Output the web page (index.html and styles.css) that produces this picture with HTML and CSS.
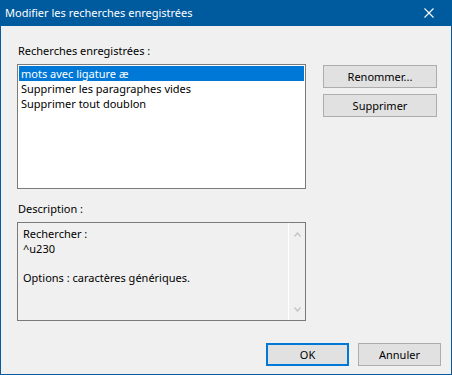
FILE: index.html
```html
<!DOCTYPE html>
<html>
<head>
  <title>Modifier les recherches enregistrées</title>
  <link rel="stylesheet" href="styles.css">
</head>
<body>
  <div class="window">
    <div class="titlebar">
      <span class="title">Modifier les recherches enregistrées</span>
      <span class="close">
        <svg width="10" height="10" viewBox="0 0 10 10">
          <path d="M0.5 0.5 L9.5 9.5 M9.5 0.5 L0.5 9.5" stroke="#fff" stroke-width="1.1" fill="none"/>
        </svg>
      </span>
    </div>
    <div class="client">
      <div class="top">
        <div class="left">
          <div class="label">Recherches enregistrées :</div>
          <ul class="listbox">
            <li class="selected">mots avec ligature æ</li>
            <li>Supprimer les paragraphes vides</li>
            <li>Supprimer tout doublon</li>
          </ul>
        </div>
        <div class="side">
          <button class="btn wide">Renommer...</button>
          <button class="btn wide">Supprimer</button>
        </div>
      </div>
      <div class="label desc-label">Description :</div>
      <div class="desc">
        <div class="desc-text">
          Rechercher :<br>
          ^u230<br>
          <br>
          Options : caractères génériques.
        </div>
        <div class="scroll">
          <svg width="7" height="5" viewBox="0 0 7 5"><path d="M0.5 4.5 L3.5 1 L6.5 4.5" stroke="#c4c4c4" stroke-width="1.4" fill="none"/></svg>
          <svg width="7" height="5" viewBox="0 0 7 5"><path d="M0.5 0.5 L3.5 4 L6.5 0.5" stroke="#c4c4c4" stroke-width="1.4" fill="none"/></svg>
        </div>
      </div>
      <div class="footer">
        <button class="btn default">OK</button>
        <button class="btn">Annuler</button>
      </div>
    </div>
  </div>
</body>
</html>
```

FILE: styles.css
```css
body {
  margin: 0;
  padding: 0;
  background-color: #f0f0f0;
  font-family: "Noto Sans", "Open Sans", sans-serif;
  font-size: 11px;
  color: #000;
}
.window {
  width: 452px;
  height: 375px;
  box-sizing: border-box;
  border: 1px solid #0a5a9c;
  border-top: none;
  display: flex;
  flex-direction: column;
}
.titlebar {
  height: 26px;
  margin: 0 -1px;
  background-color: #005a9e;
  color: #fff;
  display: flex;
  align-items: center;
  justify-content: space-between;
}
.title {
  padding-left: 5px;
  line-height: 26px;
}
.close {
  width: 46px;
  height: 26px;
  display: flex;
  align-items: center;
  justify-content: center;
}
.client {
  padding: 17px 10px 0 16px;
}
.top {
  display: flex;
}
.left {
  width: 289px;
}
.label {
  line-height: 15px;
  height: 15px;
  padding-left: 1px;
}
.listbox {
  list-style: none;
  margin: 6px 0 0 0;
  padding: 1px;
  height: 121px;
  background: #fff;
  border: 1px solid #7a7a7a;
}
.listbox li {
  height: 15px;
  line-height: 15px;
  padding-left: 2px;
}
.listbox li.selected {
  background-color: #0078d7;
  color: #fff;
}
.side {
  margin: 22px 0 0 17px;
  display: flex;
  flex-direction: column;
  gap: 6px;
}
.btn {
  font-family: inherit;
  font-size: 11px;
  height: 23px;
  width: 83px;
  padding: 0;
  background-color: #e1e1e1;
  border: 1px solid #adadad;
  color: #000;
  box-sizing: border-box;
}
.btn.wide {
  width: 114px;
}
.btn.default {
  border: 2px solid #0078d7;
}
.desc-label {
  margin-top: 12px;
}
.desc {
  margin-top: 6px;
  width: 289px;
  height: 99px;
  box-sizing: border-box;
  border: 1px solid #7a7a7a;
  display: flex;
}
.desc-text {
  flex: 1;
  padding: 4px 0 0 5px;
  line-height: 14.5px;
}
.scroll {
  width: 16px;
  border-left: 1px solid #fff;
  display: flex;
  flex-direction: column;
  justify-content: space-between;
  align-items: center;
  padding: 9px 0 8px;
}
.footer {
  margin-top: 22px;
  display: flex;
  justify-content: flex-end;
  gap: 9px;
}
```
